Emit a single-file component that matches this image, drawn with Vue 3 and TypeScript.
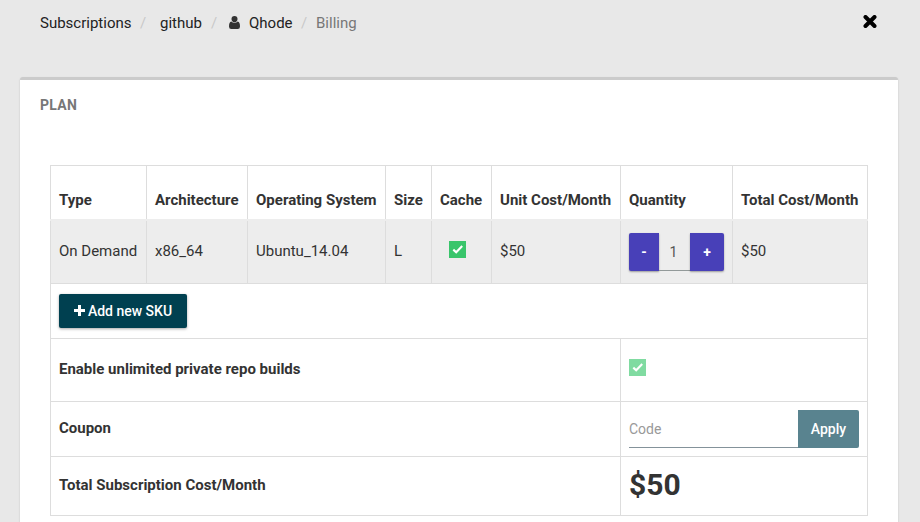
<script setup lang="ts">
import { computed, ref } from 'vue'

interface Sku {
  type: string
  arch: string
  os: string
  size: string
  unit: number
}

const headers: string[] = [
  'Type',
  'Architecture',
  'Operating System',
  'Size',
  'Cache',
  'Unit Cost/Month',
  'Quantity',
  'Total Cost/Month',
]
const sku: Sku = { type: 'On Demand', arch: 'x86_64', os: 'Ubuntu_14.04', size: 'L', unit: 50 }
const quantity = ref(1)
const code = ref('')
const total = computed(() => sku.unit * quantity.value)

function step(delta: number): void {
  quantity.value = Math.max(1, quantity.value + delta)
}
</script>

<template>
  <div class="page">
    <header class="topbar">
      <nav class="crumbs">
        <a class="crumb subscriptions">Subscriptions</a>
        <span class="slash first">/</span>
        <a class="crumb github">github</a>
        <span class="slash second">/</span>
        <svg class="user" viewBox="0 0 11 13" width="11" height="13">
          <ellipse cx="5.5" cy="3.1" rx="3" ry="3.1" />
          <path d="M2.3 5.6Q0 6.3 0 10.5Q0 13 2.3 13H8.7Q11 13 11 10.5Q11 6.3 8.7 5.6Q7.4 6.8 5.5 6.8Q3.6 6.8 2.3 5.6Z" />
        </svg>
        <a class="crumb name">Qhode</a>
        <span class="slash third">/</span>
        <span class="crumb current">Billing</span>
      </nav>
      <svg class="close" viewBox="0 0 14 14" width="14" height="14">
        <path d="M2.5 2L11.5 11M11.5 2L2.5 11" />
      </svg>
    </header>

    <section class="card">
      <h2 class="title">PLAN</h2>
      <div class="table">
        <div class="row head">
          <div v-for="h in headers" :key="h" class="cell">{{ h }}</div>
        </div>
        <div class="row sku">
          <div class="cell">{{ sku.type }}</div>
          <div class="cell">{{ sku.arch }}</div>
          <div class="cell">{{ sku.os }}</div>
          <div class="cell">{{ sku.size }}</div>
          <div class="cell cache">
            <span class="check">
              <svg viewBox="0 0 17 17" width="17" height="17"><path d="M4.3 8.6L7.2 11.2L13.2 5" /></svg>
            </span>
          </div>
          <div class="cell">${{ sku.unit }}</div>
          <div class="cell qty">
            <div class="stepper">
              <button class="minus" @click="step(-1)">-</button>
              <span class="value">{{ quantity }}</span>
              <button class="plus" @click="step(1)">+</button>
            </div>
          </div>
          <div class="cell">${{ total }}</div>
        </div>
        <div class="row add">
          <div class="cell">
            <button class="addbtn">
              <svg viewBox="0 0 11 11" width="11" height="11"><path d="M5.5 0V11M0 5.5H11" /></svg>
              <span>Add new SKU</span>
            </button>
          </div>
        </div>
        <div class="row pair private">
          <div class="cell">Enable unlimited private repo builds</div>
          <div class="cell">
            <span class="check faded">
              <svg viewBox="0 0 17 17" width="17" height="17"><path d="M4.3 8.6L7.2 11.2L13.2 5" /></svg>
            </span>
          </div>
        </div>
        <div class="row pair coupon">
          <div class="cell">Coupon</div>
          <div class="cell">
            <div class="field">
              <input v-model="code" class="input" type="text" placeholder="Code" />
              <button class="apply">Apply</button>
            </div>
          </div>
        </div>
        <div class="row pair total">
          <div class="cell">Total Subscription Cost/Month</div>
          <div class="cell amount">${{ total }}</div>
        </div>
      </div>
    </section>
  </div>
</template>

<style>
body {
  background: #e8e8e8;
}
</style>

<style scoped>
.page {
  box-sizing: border-box;
  height: 522px;
  overflow: hidden;
  padding: 0 22px 0 20px;
  background: #e8e8e8;
  color: #333;
  font: 15px/20px Roboto, 'Liberation Sans', sans-serif;
}
.page * {
  box-sizing: border-box;
}
button,
input {
  font: inherit;
  letter-spacing: inherit;
  border: 0;
  margin: 0;
  padding: 0;
  outline: 0;
}
.topbar {
  display: flex;
  justify-content: space-between;
  height: 77px;
  padding: 13px 21px 0 20px;
}
.crumbs {
  display: flex;
  height: 20px;
  white-space: nowrap;
}
.crumb {
  color: #222;
}
.subscriptions {
  width: 92px;
}
.slash {
  color: #c8c8c8;
}
.first {
  width: 20px;
  margin-left: 8px;
}
.github {
  width: 42px;
}
.second {
  width: 10px;
  margin-left: 9px;
}
.user {
  margin: 3px 9px 0 8px;
  fill: #333;
}
.name {
  width: 44px;
}
.third {
  width: 15px;
  margin-left: 8px;
}
.crumb.current {
  color: #777;
}
.close {
  margin-top: 2px;
  fill: none;
  stroke: #000;
  stroke-width: 4;
  stroke-linecap: round;
}
.card {
  height: 460px;
  padding: 15px 30px 0;
  border-top: 3px solid #cbcbcb;
  border-radius: 3px 3px 0 0;
  background: #fff;
  box-shadow: 0 1px 2px rgba(0, 0, 0, 0.18);
}
.title {
  margin: 0 0 50px -10px;
  color: #777;
  font-size: 14px;
  line-height: 20px;
  font-weight: 700;
  letter-spacing: 0.3px;
}
.table {
  width: 818px;
  border-top: 1px solid #ddd;
}
.row {
  display: grid;
}
.cell {
  display: flex;
  align-items: center;
  min-width: 0;
  padding-left: 8px;
  border-right: 1px solid #ddd;
  border-bottom: 1px solid #ddd;
  white-space: nowrap;
}
.cell:first-child {
  border-left: 1px solid #ddd;
}
.head,
.sku {
  grid-template-columns: 97px 101px 138px 46px 60px 129px 112px 135px;
}
.head {
  height: 53px;
  font-weight: 700;
}
.head .cell {
  padding-top: 15px;
  border-bottom: 0;
}
.sku {
  height: 65px;
  padding-top: 2px;
  background: #ededed;
}
.sku .cell {
  padding-bottom: 2px;
}
.sku .qty {
  padding-bottom: 0;
}
.add {
  height: 55px;
}
.pair {
  grid-template-columns: 571px 247px;
  font-weight: 700;
}
.private {
  height: 63px;
}
.private .cell {
  padding-bottom: 2px;
}
.private .cell:last-child {
  padding-bottom: 5px;
}
.coupon {
  height: 55px;
}
.coupon .cell:first-child {
  padding-bottom: 3px;
}
.total {
  height: 59px;
}
.total .cell {
  padding-bottom: 3px;
}
.sku .cache {
  justify-content: center;
  padding: 0 8px 5px 0;
}
.check {
  display: block;
  width: 17px;
  height: 17px;
  background: #39c56b;
}
.check svg {
  display: block;
}
.check path {
  fill: none;
  stroke: #fff;
  stroke-width: 2.1;
}
.faded {
  background: #80dba1;
}
.stepper {
  display: flex;
  width: 95px;
  height: 38px;
}
.minus,
.plus {
  background: #4840b8;
  color: #fff;
  font-size: 14px;
  font-weight: 700;
  box-shadow: 0 1px 2px rgba(0, 0, 0, 0.35);
}
.minus {
  width: 30px;
  border-radius: 2px 0 0 2px;
}
.plus {
  width: 34px;
  border-radius: 0 2px 2px 0;
}
.value {
  width: 31px;
  height: 38px;
  padding-right: 2px;
  border-bottom: 1px solid #929999;
  color: #555;
  font-size: 14px;
  line-height: 38px;
  text-align: center;
}
.addbtn {
  display: flex;
  align-items: center;
  justify-content: center;
  gap: 3px;
  width: 128px;
  height: 34px;
  border-radius: 2px;
  background: #004050;
  color: #fff;
  font-size: 14px;
  font-weight: 500;
  box-shadow: 0 1px 3px rgba(0, 0, 0, 0.35);
}
.addbtn svg {
  margin-top: -1px;
}
.addbtn path {
  stroke: #fff;
  stroke-width: 3;
}
.field {
  display: flex;
  width: 230px;
  height: 38px;
}
.input {
  width: 169px;
  height: 38px;
  border-bottom: 1px solid #84929a;
  background: transparent;
  font-size: 14px;
  font-weight: 400;
}
.input::placeholder {
  color: #999;
  opacity: 1;
}
.apply {
  width: 61px;
  border-radius: 0 2px 2px 0;
  background: #59838f;
  color: #fff;
  font-size: 14px;
  font-weight: 500;
}
.amount {
  font-size: 30px;
  line-height: 36px;
}
.total .amount {
  padding-bottom: 2px;
}
</style>
